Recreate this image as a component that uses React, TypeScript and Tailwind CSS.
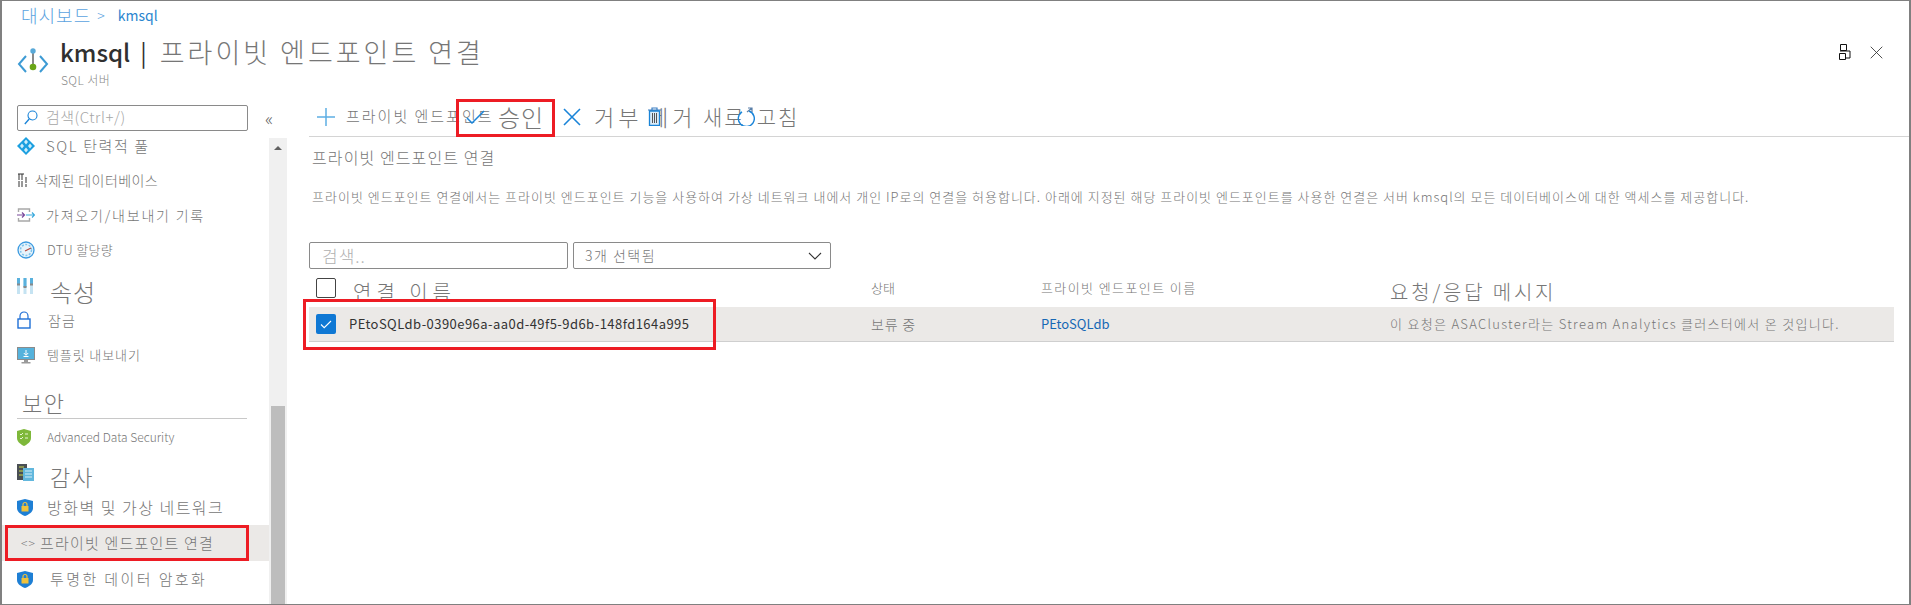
import { ReactNode } from "react";

const font = "font-['Noto_Sans_CJK_KR','Liberation_Sans',sans-serif]";

const PlusIcon = () => (
  <svg width="18" height="18" viewBox="0 0 18 18" className="shrink-0">
    <path d="M9 0v18M0 9h18" stroke="#5eaee4" strokeWidth="1.5" />
  </svg>
);

const CheckIcon = () => (
  <svg width="19" height="14" viewBox="0 0 19 14" className="relative shrink-0">
    <path d="M1 8l5 5L18 1" fill="none" stroke="#1a84d8" strokeWidth="1.5" />
  </svg>
);

const CloseIcon = ({ size = 18, color = "#1a84d8", width = 1.6 }: { size?: number; color?: string; width?: number }) => (
  <svg width={size} height={size} viewBox="0 0 18 18" className="relative shrink-0">
    <path d="M1 1l16 16M17 1L1 17" fill="none" stroke={color} strokeWidth={width} />
  </svg>
);

const TrashIcon = () => (
  <svg width="13" height="19" viewBox="0 0 13 19" className="relative shrink-0">
    <path d="M0 3h13M4 3V1h5v2" fill="none" stroke="#3a7fc4" strokeWidth="1.2" />
    <path d="M1.500 4h10v14.500h-10z" fill="#dcebf7" stroke="#1a84d8" strokeWidth="1.3" />
    <path d="M4.500 6v10M6.500 6v10M8.500 6v10" stroke="#555" strokeWidth="1" />
  </svg>
);

const RefreshIcon = () => (
  <svg width="18" height="19" viewBox="0 0 18 19" className="relative shrink-0">
    <path d="M5 3.800a8 8 0 1 0 7 -.8" fill="none" stroke="#1a84d8" strokeWidth="1.4" transform="translate(0 1)" />
    <path d="M10 5l5-4M11 1h4v4" fill="none" stroke="#5a7fa8" strokeWidth="1.2" />
  </svg>
);

const ResourceIcon = () => (
  <svg width="32" height="32" viewBox="0 0 32 32">
    <path d="M9 11L2 19l7 8M23 11l7 8-7 8" fill="none" stroke="#3d9bd4" strokeWidth="2" transform="translate(0 -2)" />
    <path d="M16 5v14" stroke="#8a8a8a" strokeWidth="2" />
    <circle cx="16" cy="4" r="2.700" fill="#59a9d8" />
    <circle cx="16" cy="20" r="3.300" fill="#6aa516" />
  </svg>
);

const PoolIcon = () => (
  <svg width="18" height="18" viewBox="0 0 18 18">
    <path d="M9 0l9 9-9 9-9-9z" fill="#1b9fe0" />
    <path d="M9 2.500L11 5 9 7.500 7 5zM5 6.500L7 9l-2 2.500L3 9zM13 6.500L15 9l-2 2.500L11 9zM9 10.500l2 2.500-2 2.500L7 13z" fill="#cdeefb" />
  </svg>
);

const TrashSmallIcon = () => (
  <svg width="16" height="16" viewBox="0 0 16 16">
    <path d="M1 2h7M2 2v13M5 2v13M9 5v10" fill="none" stroke="#333" strokeWidth="1" strokeDasharray="6 1" />
  </svg>
);

const ImportIcon = () => (
  <svg width="18" height="14" viewBox="0 0 18 14">
    <path d="M1.500 4V1h11v3M1.500 10v3h11v-3" fill="none" stroke="#a8a8a8" strokeWidth="1.400" />
    <path d="M0 7h7M5 4.500L7.500 7 5 9.500" fill="none" stroke="#7a4a9c" strokeWidth="1.200" />
    <path d="M9 7h8M15 4.500L17.500 7 15 9.500" fill="none" stroke="#39a9dc" strokeWidth="1.200" />
  </svg>
);

const GaugeIcon = () => (
  <svg width="18" height="18" viewBox="0 0 18 18">
    <circle cx="9" cy="9" r="8" fill="#e6f3fb" stroke="#3b9ae0" strokeWidth="1.300" />
    <circle cx="9" cy="9" r="5.500" fill="none" stroke="#7fc4ec" strokeWidth="1.500" strokeDasharray="2 1.500" />
    <path d="M8 10l6-3" stroke="#b5443a" strokeWidth="1.200" />
  </svg>
);

const SlidersIcon = () => (
  <svg width="16" height="16" viewBox="0 0 16 16">
    <path d="M0 0h3v16H0zM6.500 0h3v16h-3zM13 0h3v16h-3z" fill="#c5e3f2" />
    <path d="M0 0h3v6H0zM6.500 0h3v9h-3zM13 0h3v6h-3z" fill="#59b1dd" />
    <path d="M0 5.500h3v2H0zM6.500 8h3v2h-3zM13 5.500h3v2h-3z" fill="#8a8a8a" />
  </svg>
);

const LockIcon = () => (
  <svg width="14" height="18" viewBox="0 0 14 18">
    <path d="M3 8V5a4 4 0 0 1 8 0v3" fill="none" stroke="#1f6fd6" strokeWidth="1.200" />
    <rect x="1" y="8" width="12" height="9" fill="#fff" stroke="#1f6fd6" strokeWidth="1.400" />
  </svg>
);

const MonitorIcon = () => (
  <svg width="18" height="17" viewBox="0 0 18 17">
    <rect width="18" height="13" fill="#8b8b8b" />
    <rect x="1" y="1" width="16" height="11" fill="#55b2dc" />
    <path d="M9 3v5M6.800 6L9 8.300 11.200 6M6.500 9.500h5" fill="none" stroke="#fff" strokeWidth="1" />
    <path d="M7 13h4v2H7zM4.500 15h9v1.500h-9z" fill="#9a9a9a" />
  </svg>
);

const GreenShieldIcon = () => (
  <svg width="14" height="17" viewBox="0 0 14 17">
    <path d="M0 2l7-2 7 2v7c0 4-4 6.500-7 8-3-1.500-7-4-7-8z" fill="#7eb83a" />
    <path d="M3 5l1 1 2-2M8 5h3M3 9l1 1 2-2M8 9h3" fill="none" stroke="#e8f5d5" strokeWidth="1" />
  </svg>
);

const AuditIcon = () => (
  <svg width="17" height="17" viewBox="0 0 17 17">
    <rect width="10" height="16" fill="#4a4f54" />
    <path d="M2 3h5M2 7h5M2 11h5" stroke="#c7d84a" strokeWidth="1" />
    <rect x="6" y="4" width="11" height="13" fill="#62b7dd" />
    <path d="M8 7h7M8 10h7M8 13h7" stroke="#d6eef8" strokeWidth="1" />
  </svg>
);

const BlueShieldIcon = () => (
  <svg width="16" height="17" viewBox="0 0 16 17">
    <path d="M0 2l8-2 8 2v7c0 4-4 6.500-8 8-4-1.500-8-4-8-8z" fill="#1e7fd4" />
    <rect x="4.500" y="7" width="7" height="5.500" fill="#f0c23b" />
    <path d="M6 7V5.500a2 2 0 0 1 4 0V7" fill="none" stroke="#f0c23b" strokeWidth="1.200" />
  </svg>
);

const SearchIcon = () => (
  <svg width="14" height="15" viewBox="0 0 14 15">
    <circle cx="8.500" cy="5.500" r="4.500" fill="none" stroke="#1a84d8" strokeWidth="1.100" />
    <path d="M5.200 9L.8 14" stroke="#1a84d8" strokeWidth="1.300" />
  </svg>
);

interface NavItem {
  label: string;
  icon?: ReactNode;
  rowClass: string;
  textClass: string;
  active?: boolean;
}

const navItems: NavItem[] = [
  { label: "SQL 탄력적 풀", icon: <PoolIcon />, rowClass: "h-[34px]", textClass: "text-[15px] tracking-[1.6px] -ml-px" },
  { label: "삭제된 데이터베이스", icon: <TrashSmallIcon />, rowClass: "h-[34px]", textClass: "text-[14px] tracking-[0.4px] -ml-[12px]" },
  { label: "가져오기/내보내기 기록", icon: <ImportIcon />, rowClass: "h-[36px]", textClass: "text-[14px] tracking-[1.8px] -ml-px" },
  { label: "DTU 할당량", icon: <GaugeIcon />, rowClass: "h-[34px]", textClass: "text-[13px] tracking-[0.3px]" },
  { label: "속성", icon: <SlidersIcon />, rowClass: "h-[38px]", textClass: "text-[24px] tracking-[1px] ml-[3px] mt-[12px]" },
  { label: "잠금", icon: <LockIcon />, rowClass: "h-[30px]", textClass: "text-[14px] tracking-[1px] ml-px" },
  { label: "템플릿 내보내기", icon: <MonitorIcon />, rowClass: "h-[40px]", textClass: "text-[13px] tracking-[0.9px]" },
];

const securityItems: NavItem[] = [
  { label: "Advanced Data Security", icon: <GreenShieldIcon />, rowClass: "h-[36px]", textClass: "text-[12px]" },
  { label: "감사", icon: <AuditIcon />, rowClass: "h-[34px]", textClass: "text-[22px] tracking-[2px] ml-[3px] mt-[8px]" },
  { label: "방화벽 및 가상 네트워크", icon: <BlueShieldIcon />, rowClass: "h-[36px]", textClass: "text-[16px] tracking-[1.5px]" },
  { label: "프라이빗 엔드포인트 연결", rowClass: "h-[36px]", textClass: "text-[15px] tracking-[1.2px]", active: true },
  { label: "투명한 데이터 암호화", icon: <BlueShieldIcon />, rowClass: "h-[36px]", textClass: "text-[15px] tracking-[2.4px] ml-[3px]" },
];

function NavRow({ item }: { item: NavItem }) {
  return (
    <div className={`flex items-center pl-[15px] text-[#767676] ${item.rowClass} ${item.active ? "bg-[#ebe9e7]" : ""}`}>
      <span className="flex w-[30px] shrink-0 items-center">
        {item.active ? <span className="ml-[4px] text-[12px] tracking-[1px]">&lt;&gt;</span> : item.icon}
      </span>
      <span className={`${item.textClass} whitespace-nowrap ${item.active ? "-ml-[7px]" : ""}`}>{item.label}</span>
    </div>
  );
}

function Sidebar() {
  return (
    <aside className="flex h-full w-[285px] shrink-0 flex-col">
      <div className="flex h-[41px] shrink-0 items-center pl-[15px]">
        <div className="flex h-[26px] w-[231px] items-center rounded-[2px] border border-[#8a8a8a] pl-[6px]">
          <SearchIcon />
          <span className="ml-[8px] text-[15px] tracking-[0.5px] text-[#a6a6a6]">검색(Ctrl+/)</span>
        </div>
        <span className="ml-[17px] text-[18px] leading-none text-[#666]">«</span>
      </div>
      <div className="flex min-h-0 flex-1">
        <div className="min-w-0 flex-1">
          <div className="-mt-[9px]">
            {navItems.map((item) => (
              <NavRow key={item.label} item={item} />
            ))}
            <div className="ml-[15px] flex h-[44px] w-[230px] items-end border-b border-[#c8c8c8] pb-[2px] pl-[5px] text-[22px] leading-[28px] tracking-[1.5px] text-[#767676]">
              보안
            </div>
            {securityItems.map((item) => (
              <NavRow key={item.label} item={item} />
            ))}
          </div>
        </div>
        <div className="relative flex w-[18px] shrink-0 flex-col items-center bg-[#f0f0f0]">
          <span className="mt-[8px] h-0 w-0 border-x-[4px] border-b-[4px] border-x-transparent border-b-[#606060]" />
          <div className="absolute bottom-0 left-[2px] top-[268px] w-[14px] bg-[#bdbdbd]" />
        </div>
      </div>
    </aside>
  );
}

function ToolbarItem({ icon, label, className, textClass }: { icon: ReactNode; label: string; className: string; textClass: string }) {
  return (
    <div className={`flex shrink-0 items-center ${className}`}>
      {icon}
      <span className={`whitespace-nowrap ${textClass}`}>{label}</span>
    </div>
  );
}

function Main() {
  return (
    <main className="min-w-0 flex-1 pl-[22px]">
      <div className="flex h-[40px] items-center border-b border-[#d4d4d4] pl-[8px]">
        <ToolbarItem icon={<PlusIcon />} label="프라이빗 엔드포인트" className="w-[149px]" textClass="ml-[11px] text-[15px] tracking-[2px] text-[#767676]" />
        <ToolbarItem icon={<CheckIcon />} label="승인" className="w-[97px]" textClass="ml-[13px] text-[24px] tracking-[1px] text-[#767676]" />
        <ToolbarItem icon={<CloseIcon />} label="거부" className="w-[85px]" textClass="ml-[13px] text-[22px] tracking-[4px] text-[#767676]" />
        <ToolbarItem icon={<TrashIcon />} label="제거" className="w-[55px]" textClass="-ml-[13px] text-[22px] tracking-[4px] text-[#767676]" />
        <div className="flex shrink-0 items-center text-[21px] tracking-[2px] text-[#767676]">
          <span>새로</span>
          <span className="-ml-[9px] flex"><RefreshIcon /></span>
          <span className="ml-[2px]">고침</span>
        </div>
      </div>
      <p className="ml-[3px] mt-[9px] text-[16px] leading-[22px] tracking-[1.1px] text-[#767676]">프라이빗 엔드포인트 연결</p>
      <p className="ml-[3px] mt-[19px] whitespace-nowrap text-[13px] leading-[20px] tracking-[1px] text-[#767676]">
        프라이빗 엔드포인트 연결에서는 프라이빗 엔드포인트 기능을 사용하여 가상 네트워크 내에서 개인 IP로의 연결을 허용합니다. 아래에 지정된 해당 프라이빗 엔드포인트를 사용한 연결은 서버 kmsql의 모든 데이터베이스에 대한 액세스를 제공합니다.
      </p>
      <div className="mt-[35px] flex gap-[5px]">
        <div className="flex h-[27px] w-[259px] items-center rounded-[2px] border border-[#8a8a8a] pl-[12px] text-[17px] tracking-[1px] text-[#b0b0b0]">
          검색..
        </div>
        <div className="flex h-[27px] w-[258px] items-center justify-between rounded-[2px] border border-[#8a8a8a] pl-[11px] pr-[8px] text-[14px] tracking-[1.5px] text-[#767676]">
          3개 선택됨
          <svg width="14" height="8" viewBox="0 0 14 8">
            <path d="M1 1l6 6 6-6" fill="none" stroke="#333" strokeWidth="1.100" />
          </svg>
        </div>
      </div>
      <div className="mr-[15px] mt-[7px] grid grid-cols-[562px_170px_349px_1fr]">
        <div className="flex h-[31px] items-start pl-[7px] pt-[2px]">
          <span className="h-[20px] w-[20px] rounded-[2px] border border-[#444]" />
          <span className="ml-[17px] mt-[-1px] text-[20px] tracking-[5px] text-[#767676]">연결 이름</span>
        </div>
        <div className="flex h-[31px] items-center pb-[8px] text-[13px] text-[#767676]">상태</div>
        <div className="flex h-[31px] items-center pb-[8px] text-[13px] tracking-[1.4px] text-[#767676]">프라이빗 엔드포인트 이름</div>
        <div className="flex h-[31px] items-center text-[20px] tracking-[2.8px] text-[#767676]">요청/응답 메시지</div>
        <div className="flex h-[35px] items-center border-b border-[#cfcfcf] bg-[#ebe9e7] pl-[7px]">
          <span className="flex h-[20px] w-[20px] items-center justify-center rounded-[2px] bg-[#0f78d4]">
            <svg width="12" height="9" viewBox="0 0 12 9">
              <path d="M1 4.500L4.200 7.700 11 1" fill="none" stroke="#fff" strokeWidth="1.100" />
            </svg>
          </span>
          <span className="ml-[13px] text-[13px] font-normal tracking-[0.45px] text-[#333]">PEtoSQLdb-0390e96a-aa0d-49f5-9d6b-148fd164a995</span>
        </div>
        <div className="flex h-[35px] items-center border-b border-[#cfcfcf] bg-[#ebe9e7] text-[14px] tracking-[0.8px] text-[#767676]">보류 중</div>
        <div className="flex h-[35px] items-center border-b border-[#cfcfcf] bg-[#ebe9e7] text-[13px] font-normal text-[#1668b5]">PEtoSQLdb</div>
        <div className="flex h-[35px] items-center whitespace-nowrap border-b border-[#cfcfcf] bg-[#ebe9e7] text-[13px] tracking-[1.3px] text-[#767676]">
          이 요청은 ASACluster라는 Stream Analytics 클러스터에서 온 것입니다.
        </div>
      </div>
    </main>
  );
}

export default function App() {
  return (
    <div className={`relative h-[605px] w-[1911px] overflow-hidden border-2 border-b-[1px] border-t-[1px] border-[#808080] bg-white font-light ${font}`}>
      <div className="flex h-[29px] items-center pl-[19px] text-[#5ba3e0]">
        <span className="text-[18px] tracking-[1px]">대시보드</span>
        <span className="ml-[6px] text-[14px]">&gt;</span>
        <span className="ml-[13px] text-[14px] font-normal text-[#2b86cf]">kmsql</span>
      </div>
      <div className="flex h-[67px] items-start pl-[15px]">
        <span className="mt-[17px]"><ResourceIcon /></span>
        <div className="ml-[11px] mt-[4px]">
          <div className="flex h-[36px] items-center whitespace-nowrap text-[#767676]">
            <span className="text-[24px] font-medium text-[#303030]">kmsql</span>
            <span className="ml-[10px] text-[24px] font-normal text-[#303030]">|</span>
            <span className="ml-[13px] text-[27px] tracking-[3px]">프라이빗 엔드포인트 연결</span>
          </div>
          <div className="mt-[1px] pl-[1px] text-[12px] tracking-[0.4px] text-[#8a8a8a]">SQL 서버</div>
        </div>
        <div className="ml-auto mr-[26px] mt-[14px] flex items-center gap-[19px]">
          <svg width="12" height="16" viewBox="0 0 12 16">
            <path d="M1.500 .5h6v6h-6zM.5 9.500h6v6H.5zM1 7h10v7H7" fill="none" stroke="#111" strokeWidth="1" />
          </svg>
          <CloseIcon size={13} color="#333" width={1.2} />
        </div>
      </div>
      <div className="flex h-[508px]">
        <Sidebar />
        <Main />
      </div>
      {/* 빨간 강조 상자 */}
      <div className="pointer-events-none absolute left-[454px] top-[98px] h-[38px] w-[99px] border-[3px] border-[#ed1c24]" />
      <div className="pointer-events-none absolute left-[301px] top-[298px] h-[51px] w-[413px] border-[3px] border-[#ed1c24]" />
      <div className="pointer-events-none absolute left-[3px] top-[524px] h-[36px] w-[244px] border-[3px] border-[#ed1c24]" />
    </div>
  );
}
